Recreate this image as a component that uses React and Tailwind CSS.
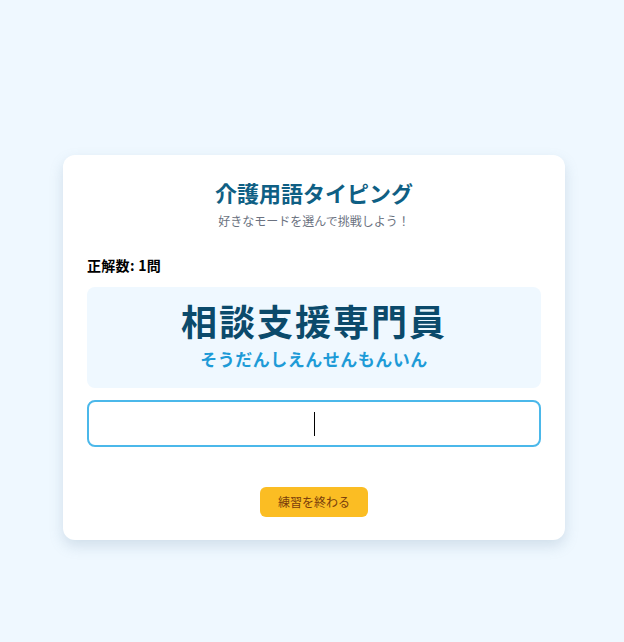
import React from "react";

export default function App() {
  const font = { fontFamily: '"Noto Sans CJK JP", "Noto Sans", sans-serif' };
  return (
    <div className="min-h-screen bg-[#eff8ff] pt-[155px]" style={font}>
      <div className="ml-[63px] w-[502px] rounded-xl bg-white px-6 pt-[22px] pb-[23px] shadow-[0_6px_14px_rgba(100,130,160,0.22)]">
        <h1 className="text-center text-[22px] leading-[30px] font-bold text-[#0f5f84]">介護用語タイピング</h1>
        <p className="mt-[5px] text-center text-[12px] leading-[18px] text-[#6b7280]">好きなモードを選んで挑戦しよう！</p>
        <div className="mt-[25px] text-[14px] leading-[20px] font-bold tracking-[0.3px] text-black">正解数: 1問</div>
        <div className="mt-[12px] flex h-[101px] flex-col items-center rounded-lg bg-[#eff8ff] pt-[8px]">
          <div className="text-[36px] leading-[50px] font-bold tracking-[2px] text-[#0b4a6b]">相談支援専門員</div>
          <div className="mt-[4px] text-[17px] leading-[20px] font-bold tracking-[0.5px] text-[#1e9bd7]">そうだんしえんせんもんいん</div>
        </div>
        <div className="mt-[12px] flex h-[47px] items-center justify-center rounded-lg border-2 border-[#4bb8ea] bg-white">
          <div className="h-[24px] w-px bg-black" />
        </div>
        <div className="mt-[40px] flex justify-center">
          <button className="h-[30px] w-[108px] rounded-md bg-[#fbbd23] text-[12px] text-[#7a3e0c]">練習を終わる</button>
        </div>
      </div>
    </div>
  );
}
